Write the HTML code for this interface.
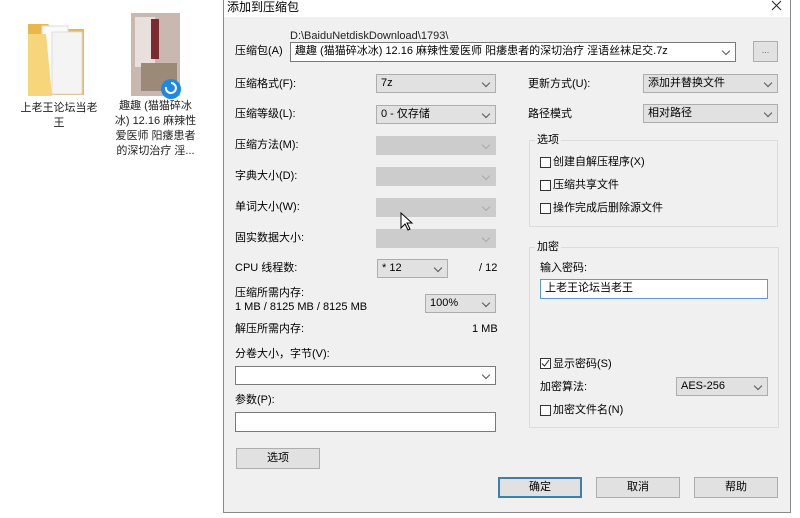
<!DOCTYPE html>
<html><head><meta charset="utf-8"><style>
*{margin:0;padding:0;box-sizing:border-box}
body{width:800px;height:518px;background:#fff;position:relative;overflow:hidden;font-family:"Liberation Sans","Noto Sans CJK SC",sans-serif;font-size:11px;color:#000}
.a{position:absolute;white-space:nowrap;line-height:13px}
.cb{position:absolute;background:#e1e1e1;border:1px solid #adadad;padding-left:4px;line-height:16px}
.cb.d{background:#cccccc;border-color:#cccccc}
.cb::after{content:"";position:absolute;right:6px;top:5px;width:5px;height:5px;border-right:1px solid #555;border-bottom:1px solid #555;transform:rotate(45deg)}
.cb.d::after{border-color:#aaa}
.cb.w{background:#fff;border-color:#7a7a7a}
.in{position:absolute;background:#fff;border:1px solid #7a7a7a;padding-left:4px;line-height:17px}
.bt{position:absolute;background:#e1e1e1;border:1px solid #adadad;text-align:center;line-height:19px}
.ck{position:absolute;width:11px;height:11px;border:1px solid #333;background:#fff}
.grp{position:absolute;border:1px solid #dcdcdc}
.gl{position:absolute;background:#f0f0f0;padding:0 2px;line-height:13px}
.dt{position:absolute;text-align:center;font-size:11px;line-height:15px;color:#222}
</style></head><body>
<svg class="a" style="left:26px;top:18px" width="62" height="80" viewBox="0 0 62 80">
<path d="M2 6h20l5 5h31v66H2z" fill="#e8b94a"/>
<rect x="16" y="8" width="26" height="66" fill="#fafafa" stroke="#ddd"/>
<rect x="26" y="14" width="30" height="62" fill="#f4f4f4" stroke="#ddd"/>
<path d="M2 16h18l6 62H2z" fill="#f7d57a"/>
</svg>
<div class="dt" style="left:14px;top:101px;width:90px">上老王论坛当老<br>王</div>
<svg class="a" style="left:131px;top:13px" width="52" height="86" viewBox="0 0 52 86">
<rect x="0" y="0" width="49" height="83" fill="#c8b8b0"/>
<rect x="4" y="4" width="20" height="50" fill="#e8e0dc"/>
<rect x="20" y="6" width="8" height="40" fill="#7a2a30"/>
<rect x="10" y="50" width="36" height="28" fill="#9c8a78"/>
<circle cx="40" cy="76" r="10" fill="#1e88e5"/>
<path d="M35 74a5 5 0 1 0 5-4" stroke="#fff" stroke-width="2" fill="none"/>
</svg>
<div class="dt" style="left:108px;top:99px;width:95px">趣趣 (猫猫碎冰<br>冰) 12.16 麻辣性<br>爱医师 阳痿患者<br>的深切治疗 淫...</div>
<div style="position:absolute;left:223px;top:0;width:568px;height:513px;background:#f0f0f0;border:1px solid #8a8a8a;border-top:none"></div>
<div style="position:absolute;left:224px;top:0;width:566px;height:17px;background:#fff"></div>
<div class="a" style="left:227px;top:1px;font-size:12px">添加到压缩包</div>
<svg class="a" style="left:771px;top:0px" width="11" height="11" viewBox="0 0 11 11"><path d="M1 1L10 10M10 1L1 10" stroke="#222" stroke-width="1"/></svg>
<div class="a" style="left:235px;top:45px">压缩包(A)</div>
<div class="a" style="left:290px;top:30px;color:#222">D:\BaiduNetdiskDownload\1793\</div>
<div class="cb w" style="left:290px;top:42px;width:446px;height:20px;line-height:17px">趣趣 (猫猫碎冰冰) 12.16 麻辣性爱医师 阳痿患者的深切治疗 淫语丝袜足交.7z</div>
<div class="bt" style="left:753px;top:41px;width:25px;height:21px;font-size:9px;line-height:17px;color:#666">...</div>
<div class="a" style="left:235px;top:78px">压缩格式(F):</div>
<div class="a" style="left:235px;top:108px">压缩等级(L):</div>
<div class="a" style="left:235px;top:139px">压缩方法(M):</div>
<div class="a" style="left:235px;top:170px">字典大小(D):</div>
<div class="a" style="left:235px;top:201px">单词大小(W):</div>
<div class="a" style="left:235px;top:232px">固实数据大小:</div>
<div class="a" style="left:235px;top:262px">CPU 线程数:</div>
<div class="a" style="left:235px;top:287px">压缩所需内存:</div>
<div class="a" style="left:235px;top:301px">1 MB / 8125 MB / 8125 MB</div>
<div class="a" style="left:235px;top:323px">解压所需内存:</div>
<div class="a" style="left:472px;top:323px">1 MB</div>
<div class="a" style="left:235px;top:348px">分卷大小，字节(V):</div>
<div class="a" style="left:235px;top:394px">参数(P):</div>
<div class="cb" style="left:376px;top:74px;width:120px;height:19px">7z</div>
<div class="cb" style="left:376px;top:105px;width:120px;height:19px">0 - 仅存储</div>
<div class="cb d" style="left:376px;top:136px;width:120px;height:19px"></div>
<div class="cb d" style="left:376px;top:167px;width:120px;height:19px"></div>
<div class="cb d" style="left:376px;top:198px;width:120px;height:19px"></div>
<div class="cb d" style="left:376px;top:229px;width:120px;height:19px"></div>
<div class="cb" style="left:377px;top:259px;width:71px;height:19px">* 12</div>
<div class="a" style="left:479px;top:262px">/ 12</div>
<div class="cb" style="left:425px;top:294px;width:71px;height:19px">100%</div>
<div class="cb w" style="left:235px;top:366px;width:261px;height:19px"></div>
<div class="in" style="left:235px;top:412px;width:261px;height:20px"></div>
<div class="bt" style="left:236px;top:448px;width:84px;height:21px">选项</div>
<div class="a" style="left:528px;top:78px">更新方式(U):</div>
<div class="cb" style="left:643px;top:74px;width:135px;height:19px">添加并替换文件</div>
<div class="a" style="left:528px;top:108px">路径模式</div>
<div class="cb" style="left:643px;top:104px;width:135px;height:19px">相对路径</div>
<div class="grp" style="left:529px;top:140px;width:249px;height:87px"></div>
<div class="gl" style="left:535px;top:134px">选项</div>
<div class="ck" style="left:540px;top:157px"></div><div class="a" style="left:553px;top:156px">创建自解压程序(X)</div>
<div class="ck" style="left:540px;top:180px"></div><div class="a" style="left:553px;top:179px">压缩共享文件</div>
<div class="ck" style="left:540px;top:203px"></div><div class="a" style="left:553px;top:202px">操作完成后删除源文件</div>
<div class="grp" style="left:529px;top:247px;width:250px;height:181px"></div>
<div class="gl" style="left:535px;top:241px">加密</div>
<div class="a" style="left:540px;top:262px">输入密码:</div>
<div class="in" style="left:540px;top:279px;width:228px;height:20px;border-color:#5a9bd5">上老王论坛当老王</div>
<div class="ck" style="left:540px;top:358px"></div>
<svg class="a" style="left:541px;top:359px" width="9" height="9" viewBox="0 0 9 9"><path d="M1 4.5L3.5 7L8 1" stroke="#222" fill="none"/></svg>
<div class="a" style="left:553px;top:358px">显示密码(S)</div>
<div class="a" style="left:540px;top:381px">加密算法:</div>
<div class="cb" style="left:676px;top:377px;width:92px;height:19px">AES-256</div>
<div class="ck" style="left:540px;top:405px"></div><div class="a" style="left:553px;top:404px">加密文件名(N)</div>
<div class="bt" style="left:498px;top:477px;width:84px;height:21px;border:2px solid #3c7fb1;line-height:17px">确定</div>
<div class="bt" style="left:596px;top:477px;width:84px;height:21px">取消</div>
<div class="bt" style="left:694px;top:477px;width:84px;height:21px">帮助</div>
<svg class="a" style="left:400px;top:212px" width="14" height="20" viewBox="0 0 14 20"><path d="M1 1v15l4-4 3 6 2-1-3-6h5z" fill="#fff" stroke="#000"/></svg>
</body></html>
